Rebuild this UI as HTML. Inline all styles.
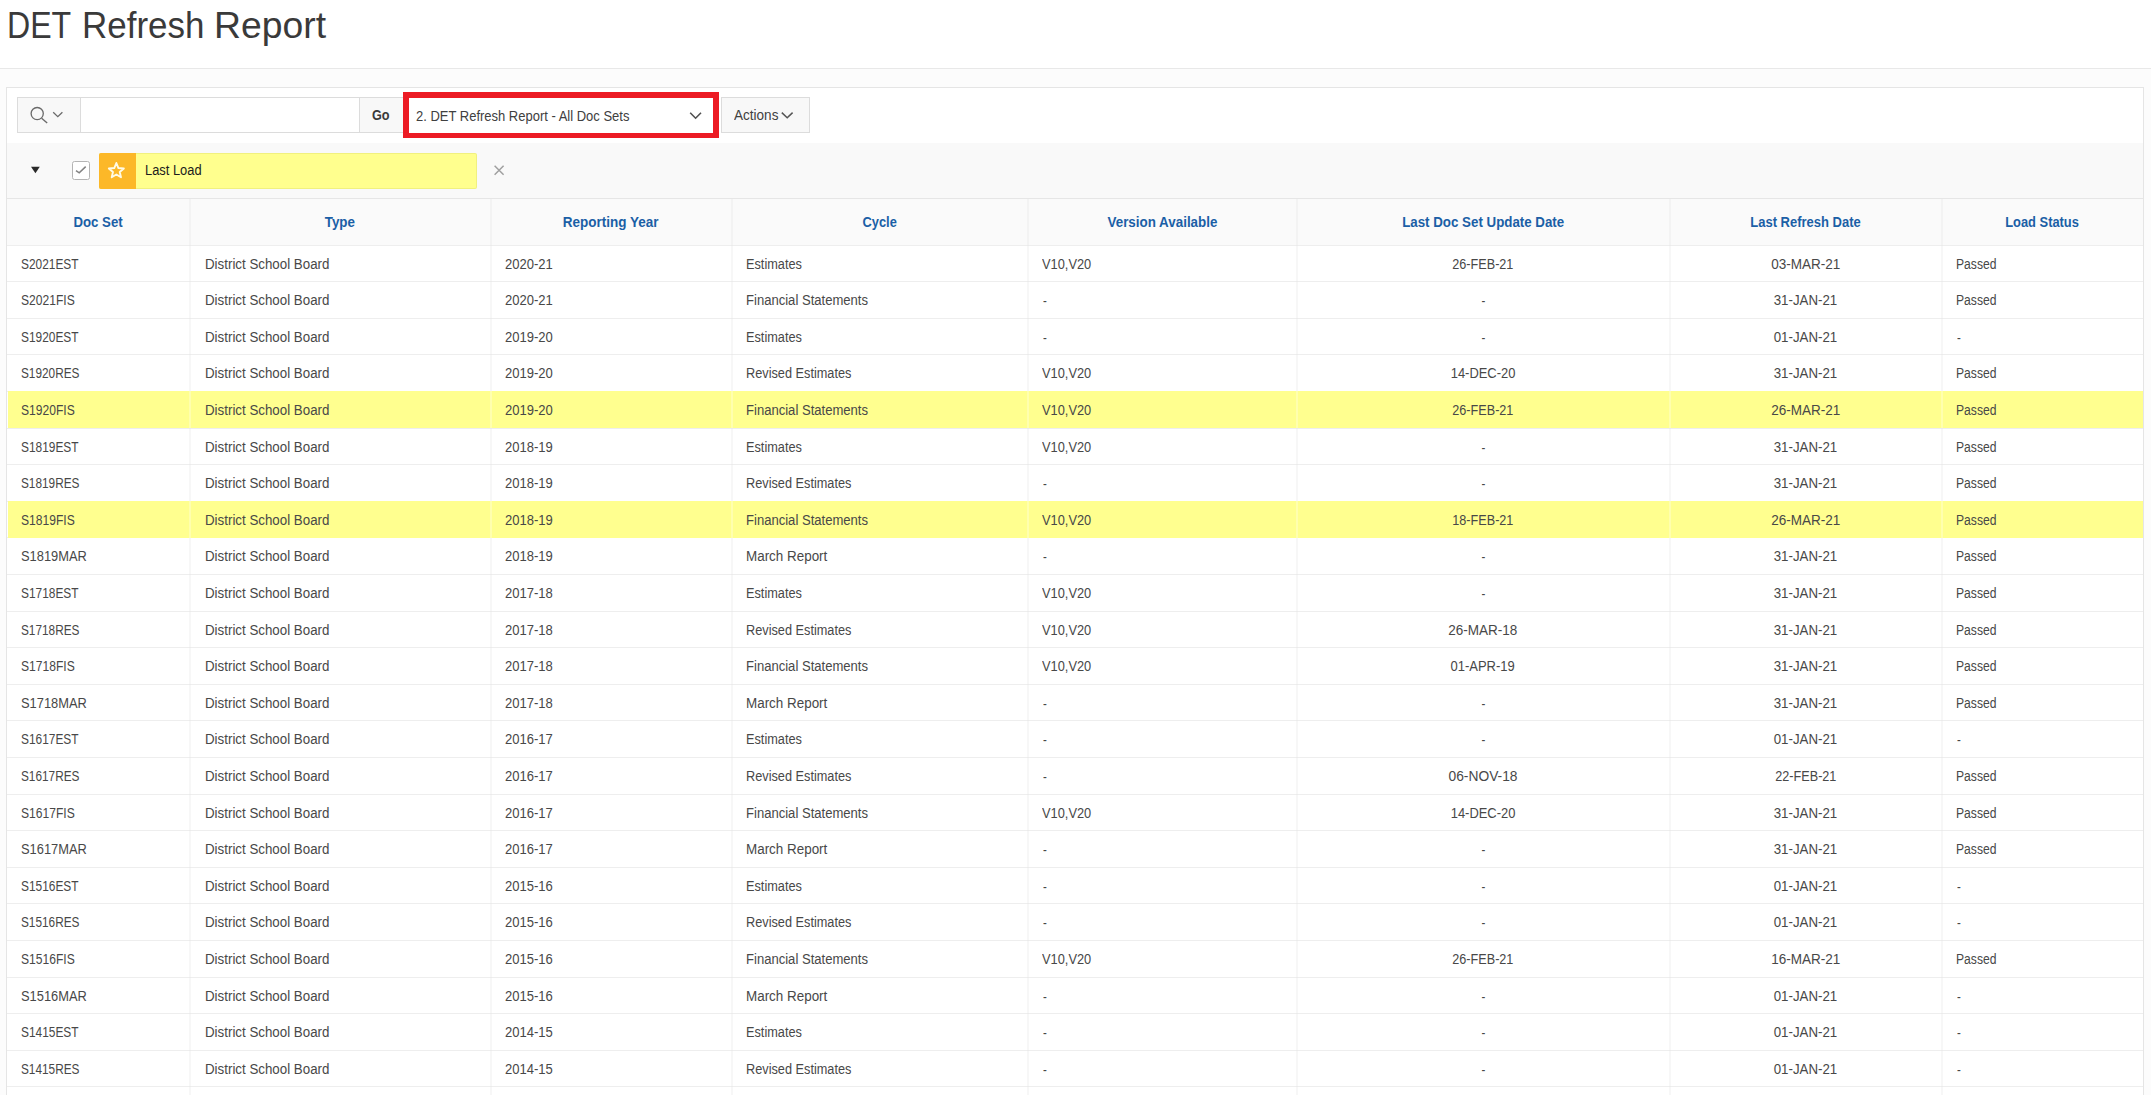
<!DOCTYPE html>
<html><head><meta charset="utf-8"><title>DET Refresh Report</title>
<style>
html,body{margin:0;padding:0;}
body{width:2151px;height:1095px;overflow:hidden;background:#fcfcfc;font-family:"Liberation Sans",sans-serif;position:relative;color:#404040;}
.abs{position:absolute;}
#top{left:0;top:0;width:2151px;height:68px;background:#fff;border-bottom:1px solid #e8e8e8;}
.tw{top:5.2px;font-size:36.5px;line-height:42px;color:#3a3a3a;white-space:nowrap;transform-origin:0 50%;}
#region{left:6px;top:87px;width:2136px;height:1020px;background:#fff;border:1px solid #e5e5e5;}
#band{left:7px;top:143px;width:2136px;height:55px;background:#f9f9f9;}
#thead{left:7px;top:198px;width:2136px;height:46px;background:#fafafa;border-top:1px solid #e6e6e6;}
.vl{position:absolute;width:2px;background:rgba(0,0,0,0.045);top:199px;height:900px;}
.hl{position:absolute;left:7px;width:2136px;height:1px;background:#eeeeee;}
.hi{position:absolute;left:8px;width:2135px;background:#ffff8f;}
.t{position:absolute;white-space:nowrap;font-size:14px;line-height:16px;height:16px;color:#484848;}
.t span{display:inline-block;transform-origin:0 50%;}
.t.c{text-align:center;}
.t.c span{transform-origin:50% 50%;}
.h{position:absolute;white-space:nowrap;font-size:14px;line-height:16px;height:16px;color:#1b5fa6;font-weight:bold;text-align:center;}
.h span{display:inline-block;transform-origin:50% 50%;}
.btn{position:absolute;background:#f8f8f8;border:1px solid #dcdcdc;box-sizing:border-box;}
</style></head><body>
<div id="top" class="abs"></div>
<div class="abs tw" style="left:7.26px;transform:scaleX(0.8801)">DET</div>
<div class="abs tw" style="left:82.12px;transform:scaleX(0.9584)">Refresh</div>
<div class="abs tw" style="left:214.33px;transform:scaleX(1.0226)">Report</div>
<div id="region" class="abs"></div>
<div id="band" class="abs"></div>
<div id="thead" class="abs"></div>
<div class="hl" style="top:244.5px"></div>
<div class="hl" style="top:281.1px"></div>
<div class="hl" style="top:317.7px"></div>
<div class="hl" style="top:354.3px"></div>
<div class="hl" style="top:390.9px"></div>
<div class="hl" style="top:427.5px"></div>
<div class="hl" style="top:464.1px"></div>
<div class="hl" style="top:500.7px"></div>
<div class="hl" style="top:537.3px"></div>
<div class="hl" style="top:573.9px"></div>
<div class="hl" style="top:610.5px"></div>
<div class="hl" style="top:647.1px"></div>
<div class="hl" style="top:683.7px"></div>
<div class="hl" style="top:720.3px"></div>
<div class="hl" style="top:756.9px"></div>
<div class="hl" style="top:793.5px"></div>
<div class="hl" style="top:830.1px"></div>
<div class="hl" style="top:866.7px"></div>
<div class="hl" style="top:903.3px"></div>
<div class="hl" style="top:939.9px"></div>
<div class="hl" style="top:976.5px"></div>
<div class="hl" style="top:1013.1px"></div>
<div class="hl" style="top:1049.7px"></div>
<div class="hl" style="top:1086.3px"></div>
<div class="vl" style="left:189px"></div>
<div class="vl" style="left:490px"></div>
<div class="vl" style="left:731px"></div>
<div class="vl" style="left:1027px"></div>
<div class="vl" style="left:1296px"></div>
<div class="vl" style="left:1669px"></div>
<div class="vl" style="left:1941px"></div>
<div class="hi" style="top:391.3px;height:36.6px"></div>
<div class="hi" style="top:501.1px;height:36.6px"></div>
<div class="vl" style="left:189px;background:rgba(255,255,255,0.28)"></div>
<div class="vl" style="left:490px;background:rgba(255,255,255,0.28)"></div>
<div class="vl" style="left:731px;background:rgba(255,255,255,0.28)"></div>
<div class="vl" style="left:1027px;background:rgba(255,255,255,0.28)"></div>
<div class="vl" style="left:1296px;background:rgba(255,255,255,0.28)"></div>
<div class="vl" style="left:1669px;background:rgba(255,255,255,0.28)"></div>
<div class="vl" style="left:1941px;background:rgba(255,255,255,0.28)"></div>
<div class="h" style="left:8px;width:181px;top:214px"><span style="transform:scaleX(0.9420)">Doc Set</span></div>
<div class="h" style="left:190px;width:300px;top:214px"><span style="transform:scaleX(0.9546)">Type</span></div>
<div class="h" style="left:491px;width:240px;top:214px"><span style="transform:scaleX(0.9625)">Reporting Year</span></div>
<div class="h" style="left:732px;width:295px;top:214px"><span style="transform:scaleX(0.9181)">Cycle</span></div>
<div class="h" style="left:1028px;width:268px;top:214px"><span style="transform:scaleX(0.9564)">Version Available</span></div>
<div class="h" style="left:1297px;width:372px;top:214px"><span style="transform:scaleX(0.9509)">Last Doc Set Update Date</span></div>
<div class="h" style="left:1670px;width:271px;top:214px"><span style="transform:scaleX(0.9274)">Last Refresh Date</span></div>
<div class="h" style="left:1942px;width:201px;top:214px"><span style="transform:scaleX(0.9187)">Load Status</span></div>
<div class="t" style="left:21.2px;top:255.6px"><span style="transform:scaleX(0.8492)">S2021EST</span></div>
<div class="t" style="left:205.4px;top:255.6px"><span style="transform:scaleX(0.9517)">District School Board</span></div>
<div class="t" style="left:504.6px;top:255.6px"><span style="transform:scaleX(0.9303)">2020-21</span></div>
<div class="t" style="left:746.2px;top:255.6px"><span style="transform:scaleX(0.9095)">Estimates</span></div>
<div class="t" style="left:1042.4px;top:255.6px"><span style="transform:scaleX(0.9160)">V10,V20</span></div>
<div class="t c" style="left:1297.0px;width:372px;top:255.6px"><span style="transform:scaleX(0.9026)">26-FEB-21</span></div>
<div class="t c" style="left:1670.0px;width:271px;top:255.6px"><span style="transform:scaleX(0.9654)">03-MAR-21</span></div>
<div class="t" style="left:1955.8px;top:255.6px"><span style="transform:scaleX(0.8673)">Passed</span></div>
<div class="t" style="left:21.2px;top:292.2px"><span style="transform:scaleX(0.8625)">S2021FIS</span></div>
<div class="t" style="left:205.4px;top:292.2px"><span style="transform:scaleX(0.9517)">District School Board</span></div>
<div class="t" style="left:504.6px;top:292.2px"><span style="transform:scaleX(0.9303)">2020-21</span></div>
<div class="t" style="left:746.2px;top:292.2px"><span style="transform:scaleX(0.9332)">Financial Statements</span></div>
<div class="t" style="left:1043.4px;top:293.2px"><span style="transform:scaleX(0.8151)">-</span></div>
<div class="t c" style="left:1297.0px;width:372px;top:293.2px"><span style="transform:scaleX(0.8151)">-</span></div>
<div class="t c" style="left:1670.0px;width:271px;top:292.2px"><span style="transform:scaleX(0.9489)">31-JAN-21</span></div>
<div class="t" style="left:1955.8px;top:292.2px"><span style="transform:scaleX(0.8673)">Passed</span></div>
<div class="t" style="left:21.2px;top:328.8px"><span style="transform:scaleX(0.8492)">S1920EST</span></div>
<div class="t" style="left:205.4px;top:328.8px"><span style="transform:scaleX(0.9517)">District School Board</span></div>
<div class="t" style="left:504.6px;top:328.8px"><span style="transform:scaleX(0.9303)">2019-20</span></div>
<div class="t" style="left:746.2px;top:328.8px"><span style="transform:scaleX(0.9095)">Estimates</span></div>
<div class="t" style="left:1043.4px;top:329.8px"><span style="transform:scaleX(0.8151)">-</span></div>
<div class="t c" style="left:1297.0px;width:372px;top:329.8px"><span style="transform:scaleX(0.8151)">-</span></div>
<div class="t c" style="left:1670.0px;width:271px;top:328.8px"><span style="transform:scaleX(0.9489)">01-JAN-21</span></div>
<div class="t" style="left:1956.8px;top:329.8px"><span style="transform:scaleX(0.8151)">-</span></div>
<div class="t" style="left:21.2px;top:365.4px"><span style="transform:scaleX(0.8431)">S1920RES</span></div>
<div class="t" style="left:205.4px;top:365.4px"><span style="transform:scaleX(0.9517)">District School Board</span></div>
<div class="t" style="left:504.6px;top:365.4px"><span style="transform:scaleX(0.9303)">2019-20</span></div>
<div class="t" style="left:746.2px;top:365.4px"><span style="transform:scaleX(0.9092)">Revised Estimates</span></div>
<div class="t" style="left:1042.4px;top:365.4px"><span style="transform:scaleX(0.9160)">V10,V20</span></div>
<div class="t c" style="left:1297.0px;width:372px;top:365.4px"><span style="transform:scaleX(0.9225)">14-DEC-20</span></div>
<div class="t c" style="left:1670.0px;width:271px;top:365.4px"><span style="transform:scaleX(0.9489)">31-JAN-21</span></div>
<div class="t" style="left:1955.8px;top:365.4px"><span style="transform:scaleX(0.8673)">Passed</span></div>
<div class="t" style="left:21.2px;top:402.0px"><span style="transform:scaleX(0.8625)">S1920FIS</span></div>
<div class="t" style="left:205.4px;top:402.0px"><span style="transform:scaleX(0.9517)">District School Board</span></div>
<div class="t" style="left:504.6px;top:402.0px"><span style="transform:scaleX(0.9303)">2019-20</span></div>
<div class="t" style="left:746.2px;top:402.0px"><span style="transform:scaleX(0.9332)">Financial Statements</span></div>
<div class="t" style="left:1042.4px;top:402.0px"><span style="transform:scaleX(0.9160)">V10,V20</span></div>
<div class="t c" style="left:1297.0px;width:372px;top:402.0px"><span style="transform:scaleX(0.9026)">26-FEB-21</span></div>
<div class="t c" style="left:1670.0px;width:271px;top:402.0px"><span style="transform:scaleX(0.9654)">26-MAR-21</span></div>
<div class="t" style="left:1955.8px;top:402.0px"><span style="transform:scaleX(0.8673)">Passed</span></div>
<div class="t" style="left:21.2px;top:438.6px"><span style="transform:scaleX(0.8492)">S1819EST</span></div>
<div class="t" style="left:205.4px;top:438.6px"><span style="transform:scaleX(0.9517)">District School Board</span></div>
<div class="t" style="left:504.6px;top:438.6px"><span style="transform:scaleX(0.9303)">2018-19</span></div>
<div class="t" style="left:746.2px;top:438.6px"><span style="transform:scaleX(0.9095)">Estimates</span></div>
<div class="t" style="left:1042.4px;top:438.6px"><span style="transform:scaleX(0.9160)">V10,V20</span></div>
<div class="t c" style="left:1297.0px;width:372px;top:439.6px"><span style="transform:scaleX(0.8151)">-</span></div>
<div class="t c" style="left:1670.0px;width:271px;top:438.6px"><span style="transform:scaleX(0.9489)">31-JAN-21</span></div>
<div class="t" style="left:1955.8px;top:438.6px"><span style="transform:scaleX(0.8673)">Passed</span></div>
<div class="t" style="left:21.2px;top:475.2px"><span style="transform:scaleX(0.8431)">S1819RES</span></div>
<div class="t" style="left:205.4px;top:475.2px"><span style="transform:scaleX(0.9517)">District School Board</span></div>
<div class="t" style="left:504.6px;top:475.2px"><span style="transform:scaleX(0.9303)">2018-19</span></div>
<div class="t" style="left:746.2px;top:475.2px"><span style="transform:scaleX(0.9092)">Revised Estimates</span></div>
<div class="t" style="left:1043.4px;top:476.2px"><span style="transform:scaleX(0.8151)">-</span></div>
<div class="t c" style="left:1297.0px;width:372px;top:476.2px"><span style="transform:scaleX(0.8151)">-</span></div>
<div class="t c" style="left:1670.0px;width:271px;top:475.2px"><span style="transform:scaleX(0.9489)">31-JAN-21</span></div>
<div class="t" style="left:1955.8px;top:475.2px"><span style="transform:scaleX(0.8673)">Passed</span></div>
<div class="t" style="left:21.2px;top:511.8px"><span style="transform:scaleX(0.8625)">S1819FIS</span></div>
<div class="t" style="left:205.4px;top:511.8px"><span style="transform:scaleX(0.9517)">District School Board</span></div>
<div class="t" style="left:504.6px;top:511.8px"><span style="transform:scaleX(0.9303)">2018-19</span></div>
<div class="t" style="left:746.2px;top:511.8px"><span style="transform:scaleX(0.9332)">Financial Statements</span></div>
<div class="t" style="left:1042.4px;top:511.8px"><span style="transform:scaleX(0.9160)">V10,V20</span></div>
<div class="t c" style="left:1297.0px;width:372px;top:511.8px"><span style="transform:scaleX(0.9026)">18-FEB-21</span></div>
<div class="t c" style="left:1670.0px;width:271px;top:511.8px"><span style="transform:scaleX(0.9654)">26-MAR-21</span></div>
<div class="t" style="left:1955.8px;top:511.8px"><span style="transform:scaleX(0.8673)">Passed</span></div>
<div class="t" style="left:21.2px;top:548.4px"><span style="transform:scaleX(0.9191)">S1819MAR</span></div>
<div class="t" style="left:205.4px;top:548.4px"><span style="transform:scaleX(0.9517)">District School Board</span></div>
<div class="t" style="left:504.6px;top:548.4px"><span style="transform:scaleX(0.9303)">2018-19</span></div>
<div class="t" style="left:746.2px;top:548.4px"><span style="transform:scaleX(0.9587)">March Report</span></div>
<div class="t" style="left:1043.4px;top:549.4px"><span style="transform:scaleX(0.8151)">-</span></div>
<div class="t c" style="left:1297.0px;width:372px;top:549.4px"><span style="transform:scaleX(0.8151)">-</span></div>
<div class="t c" style="left:1670.0px;width:271px;top:548.4px"><span style="transform:scaleX(0.9489)">31-JAN-21</span></div>
<div class="t" style="left:1955.8px;top:548.4px"><span style="transform:scaleX(0.8673)">Passed</span></div>
<div class="t" style="left:21.2px;top:585.0px"><span style="transform:scaleX(0.8492)">S1718EST</span></div>
<div class="t" style="left:205.4px;top:585.0px"><span style="transform:scaleX(0.9517)">District School Board</span></div>
<div class="t" style="left:504.6px;top:585.0px"><span style="transform:scaleX(0.9303)">2017-18</span></div>
<div class="t" style="left:746.2px;top:585.0px"><span style="transform:scaleX(0.9095)">Estimates</span></div>
<div class="t" style="left:1042.4px;top:585.0px"><span style="transform:scaleX(0.9160)">V10,V20</span></div>
<div class="t c" style="left:1297.0px;width:372px;top:586.0px"><span style="transform:scaleX(0.8151)">-</span></div>
<div class="t c" style="left:1670.0px;width:271px;top:585.0px"><span style="transform:scaleX(0.9489)">31-JAN-21</span></div>
<div class="t" style="left:1955.8px;top:585.0px"><span style="transform:scaleX(0.8673)">Passed</span></div>
<div class="t" style="left:21.2px;top:621.6px"><span style="transform:scaleX(0.8431)">S1718RES</span></div>
<div class="t" style="left:205.4px;top:621.6px"><span style="transform:scaleX(0.9517)">District School Board</span></div>
<div class="t" style="left:504.6px;top:621.6px"><span style="transform:scaleX(0.9303)">2017-18</span></div>
<div class="t" style="left:746.2px;top:621.6px"><span style="transform:scaleX(0.9092)">Revised Estimates</span></div>
<div class="t" style="left:1042.4px;top:621.6px"><span style="transform:scaleX(0.9160)">V10,V20</span></div>
<div class="t c" style="left:1297.0px;width:372px;top:621.6px"><span style="transform:scaleX(0.9654)">26-MAR-18</span></div>
<div class="t c" style="left:1670.0px;width:271px;top:621.6px"><span style="transform:scaleX(0.9489)">31-JAN-21</span></div>
<div class="t" style="left:1955.8px;top:621.6px"><span style="transform:scaleX(0.8673)">Passed</span></div>
<div class="t" style="left:21.2px;top:658.2px"><span style="transform:scaleX(0.8625)">S1718FIS</span></div>
<div class="t" style="left:205.4px;top:658.2px"><span style="transform:scaleX(0.9517)">District School Board</span></div>
<div class="t" style="left:504.6px;top:658.2px"><span style="transform:scaleX(0.9303)">2017-18</span></div>
<div class="t" style="left:746.2px;top:658.2px"><span style="transform:scaleX(0.9332)">Financial Statements</span></div>
<div class="t" style="left:1042.4px;top:658.2px"><span style="transform:scaleX(0.9160)">V10,V20</span></div>
<div class="t c" style="left:1297.0px;width:372px;top:658.2px"><span style="transform:scaleX(0.9285)">01-APR-19</span></div>
<div class="t c" style="left:1670.0px;width:271px;top:658.2px"><span style="transform:scaleX(0.9489)">31-JAN-21</span></div>
<div class="t" style="left:1955.8px;top:658.2px"><span style="transform:scaleX(0.8673)">Passed</span></div>
<div class="t" style="left:21.2px;top:694.8px"><span style="transform:scaleX(0.9191)">S1718MAR</span></div>
<div class="t" style="left:205.4px;top:694.8px"><span style="transform:scaleX(0.9517)">District School Board</span></div>
<div class="t" style="left:504.6px;top:694.8px"><span style="transform:scaleX(0.9303)">2017-18</span></div>
<div class="t" style="left:746.2px;top:694.8px"><span style="transform:scaleX(0.9587)">March Report</span></div>
<div class="t" style="left:1043.4px;top:695.8px"><span style="transform:scaleX(0.8151)">-</span></div>
<div class="t c" style="left:1297.0px;width:372px;top:695.8px"><span style="transform:scaleX(0.8151)">-</span></div>
<div class="t c" style="left:1670.0px;width:271px;top:694.8px"><span style="transform:scaleX(0.9489)">31-JAN-21</span></div>
<div class="t" style="left:1955.8px;top:694.8px"><span style="transform:scaleX(0.8673)">Passed</span></div>
<div class="t" style="left:21.2px;top:731.4px"><span style="transform:scaleX(0.8492)">S1617EST</span></div>
<div class="t" style="left:205.4px;top:731.4px"><span style="transform:scaleX(0.9517)">District School Board</span></div>
<div class="t" style="left:504.6px;top:731.4px"><span style="transform:scaleX(0.9303)">2016-17</span></div>
<div class="t" style="left:746.2px;top:731.4px"><span style="transform:scaleX(0.9095)">Estimates</span></div>
<div class="t" style="left:1043.4px;top:732.4px"><span style="transform:scaleX(0.8151)">-</span></div>
<div class="t c" style="left:1297.0px;width:372px;top:732.4px"><span style="transform:scaleX(0.8151)">-</span></div>
<div class="t c" style="left:1670.0px;width:271px;top:731.4px"><span style="transform:scaleX(0.9489)">01-JAN-21</span></div>
<div class="t" style="left:1956.8px;top:732.4px"><span style="transform:scaleX(0.8151)">-</span></div>
<div class="t" style="left:21.2px;top:768.0px"><span style="transform:scaleX(0.8431)">S1617RES</span></div>
<div class="t" style="left:205.4px;top:768.0px"><span style="transform:scaleX(0.9517)">District School Board</span></div>
<div class="t" style="left:504.6px;top:768.0px"><span style="transform:scaleX(0.9303)">2016-17</span></div>
<div class="t" style="left:746.2px;top:768.0px"><span style="transform:scaleX(0.9092)">Revised Estimates</span></div>
<div class="t" style="left:1043.4px;top:769.0px"><span style="transform:scaleX(0.8151)">-</span></div>
<div class="t c" style="left:1297.0px;width:372px;top:768.0px"><span style="transform:scaleX(0.9852)">06-NOV-18</span></div>
<div class="t c" style="left:1670.0px;width:271px;top:768.0px"><span style="transform:scaleX(0.9026)">22-FEB-21</span></div>
<div class="t" style="left:1955.8px;top:768.0px"><span style="transform:scaleX(0.8673)">Passed</span></div>
<div class="t" style="left:21.2px;top:804.6px"><span style="transform:scaleX(0.8625)">S1617FIS</span></div>
<div class="t" style="left:205.4px;top:804.6px"><span style="transform:scaleX(0.9517)">District School Board</span></div>
<div class="t" style="left:504.6px;top:804.6px"><span style="transform:scaleX(0.9303)">2016-17</span></div>
<div class="t" style="left:746.2px;top:804.6px"><span style="transform:scaleX(0.9332)">Financial Statements</span></div>
<div class="t" style="left:1042.4px;top:804.6px"><span style="transform:scaleX(0.9160)">V10,V20</span></div>
<div class="t c" style="left:1297.0px;width:372px;top:804.6px"><span style="transform:scaleX(0.9225)">14-DEC-20</span></div>
<div class="t c" style="left:1670.0px;width:271px;top:804.6px"><span style="transform:scaleX(0.9489)">31-JAN-21</span></div>
<div class="t" style="left:1955.8px;top:804.6px"><span style="transform:scaleX(0.8673)">Passed</span></div>
<div class="t" style="left:21.2px;top:841.2px"><span style="transform:scaleX(0.9191)">S1617MAR</span></div>
<div class="t" style="left:205.4px;top:841.2px"><span style="transform:scaleX(0.9517)">District School Board</span></div>
<div class="t" style="left:504.6px;top:841.2px"><span style="transform:scaleX(0.9303)">2016-17</span></div>
<div class="t" style="left:746.2px;top:841.2px"><span style="transform:scaleX(0.9587)">March Report</span></div>
<div class="t" style="left:1043.4px;top:842.2px"><span style="transform:scaleX(0.8151)">-</span></div>
<div class="t c" style="left:1297.0px;width:372px;top:842.2px"><span style="transform:scaleX(0.8151)">-</span></div>
<div class="t c" style="left:1670.0px;width:271px;top:841.2px"><span style="transform:scaleX(0.9489)">31-JAN-21</span></div>
<div class="t" style="left:1955.8px;top:841.2px"><span style="transform:scaleX(0.8673)">Passed</span></div>
<div class="t" style="left:21.2px;top:877.8px"><span style="transform:scaleX(0.8492)">S1516EST</span></div>
<div class="t" style="left:205.4px;top:877.8px"><span style="transform:scaleX(0.9517)">District School Board</span></div>
<div class="t" style="left:504.6px;top:877.8px"><span style="transform:scaleX(0.9303)">2015-16</span></div>
<div class="t" style="left:746.2px;top:877.8px"><span style="transform:scaleX(0.9095)">Estimates</span></div>
<div class="t" style="left:1043.4px;top:878.8px"><span style="transform:scaleX(0.8151)">-</span></div>
<div class="t c" style="left:1297.0px;width:372px;top:878.8px"><span style="transform:scaleX(0.8151)">-</span></div>
<div class="t c" style="left:1670.0px;width:271px;top:877.8px"><span style="transform:scaleX(0.9489)">01-JAN-21</span></div>
<div class="t" style="left:1956.8px;top:878.8px"><span style="transform:scaleX(0.8151)">-</span></div>
<div class="t" style="left:21.2px;top:914.4px"><span style="transform:scaleX(0.8431)">S1516RES</span></div>
<div class="t" style="left:205.4px;top:914.4px"><span style="transform:scaleX(0.9517)">District School Board</span></div>
<div class="t" style="left:504.6px;top:914.4px"><span style="transform:scaleX(0.9303)">2015-16</span></div>
<div class="t" style="left:746.2px;top:914.4px"><span style="transform:scaleX(0.9092)">Revised Estimates</span></div>
<div class="t" style="left:1043.4px;top:915.4px"><span style="transform:scaleX(0.8151)">-</span></div>
<div class="t c" style="left:1297.0px;width:372px;top:915.4px"><span style="transform:scaleX(0.8151)">-</span></div>
<div class="t c" style="left:1670.0px;width:271px;top:914.4px"><span style="transform:scaleX(0.9489)">01-JAN-21</span></div>
<div class="t" style="left:1956.8px;top:915.4px"><span style="transform:scaleX(0.8151)">-</span></div>
<div class="t" style="left:21.2px;top:951.0px"><span style="transform:scaleX(0.8625)">S1516FIS</span></div>
<div class="t" style="left:205.4px;top:951.0px"><span style="transform:scaleX(0.9517)">District School Board</span></div>
<div class="t" style="left:504.6px;top:951.0px"><span style="transform:scaleX(0.9303)">2015-16</span></div>
<div class="t" style="left:746.2px;top:951.0px"><span style="transform:scaleX(0.9332)">Financial Statements</span></div>
<div class="t" style="left:1042.4px;top:951.0px"><span style="transform:scaleX(0.9160)">V10,V20</span></div>
<div class="t c" style="left:1297.0px;width:372px;top:951.0px"><span style="transform:scaleX(0.9026)">26-FEB-21</span></div>
<div class="t c" style="left:1670.0px;width:271px;top:951.0px"><span style="transform:scaleX(0.9654)">16-MAR-21</span></div>
<div class="t" style="left:1955.8px;top:951.0px"><span style="transform:scaleX(0.8673)">Passed</span></div>
<div class="t" style="left:21.2px;top:987.6px"><span style="transform:scaleX(0.9191)">S1516MAR</span></div>
<div class="t" style="left:205.4px;top:987.6px"><span style="transform:scaleX(0.9517)">District School Board</span></div>
<div class="t" style="left:504.6px;top:987.6px"><span style="transform:scaleX(0.9303)">2015-16</span></div>
<div class="t" style="left:746.2px;top:987.6px"><span style="transform:scaleX(0.9587)">March Report</span></div>
<div class="t" style="left:1043.4px;top:988.6px"><span style="transform:scaleX(0.8151)">-</span></div>
<div class="t c" style="left:1297.0px;width:372px;top:988.6px"><span style="transform:scaleX(0.8151)">-</span></div>
<div class="t c" style="left:1670.0px;width:271px;top:987.6px"><span style="transform:scaleX(0.9489)">01-JAN-21</span></div>
<div class="t" style="left:1956.8px;top:988.6px"><span style="transform:scaleX(0.8151)">-</span></div>
<div class="t" style="left:21.2px;top:1024.2px"><span style="transform:scaleX(0.8492)">S1415EST</span></div>
<div class="t" style="left:205.4px;top:1024.2px"><span style="transform:scaleX(0.9517)">District School Board</span></div>
<div class="t" style="left:504.6px;top:1024.2px"><span style="transform:scaleX(0.9303)">2014-15</span></div>
<div class="t" style="left:746.2px;top:1024.2px"><span style="transform:scaleX(0.9095)">Estimates</span></div>
<div class="t" style="left:1043.4px;top:1025.2px"><span style="transform:scaleX(0.8151)">-</span></div>
<div class="t c" style="left:1297.0px;width:372px;top:1025.2px"><span style="transform:scaleX(0.8151)">-</span></div>
<div class="t c" style="left:1670.0px;width:271px;top:1024.2px"><span style="transform:scaleX(0.9489)">01-JAN-21</span></div>
<div class="t" style="left:1956.8px;top:1025.2px"><span style="transform:scaleX(0.8151)">-</span></div>
<div class="t" style="left:21.2px;top:1060.8px"><span style="transform:scaleX(0.8431)">S1415RES</span></div>
<div class="t" style="left:205.4px;top:1060.8px"><span style="transform:scaleX(0.9517)">District School Board</span></div>
<div class="t" style="left:504.6px;top:1060.8px"><span style="transform:scaleX(0.9303)">2014-15</span></div>
<div class="t" style="left:746.2px;top:1060.8px"><span style="transform:scaleX(0.9092)">Revised Estimates</span></div>
<div class="t" style="left:1043.4px;top:1061.8px"><span style="transform:scaleX(0.8151)">-</span></div>
<div class="t c" style="left:1297.0px;width:372px;top:1061.8px"><span style="transform:scaleX(0.8151)">-</span></div>
<div class="t c" style="left:1670.0px;width:271px;top:1060.8px"><span style="transform:scaleX(0.9489)">01-JAN-21</span></div>
<div class="t" style="left:1956.8px;top:1061.8px"><span style="transform:scaleX(0.8151)">-</span></div>

<div class="btn" style="left:17px;top:97px;width:63px;height:36px;border-right:none;"></div>
<svg class="abs" style="left:28.2px;top:103.6px" width="40" height="22" viewBox="0 0 40 22">
 <circle cx="9.2" cy="9.6" r="6.1" fill="none" stroke="#6a6a6a" stroke-width="1.3"/>
 <line x1="13.6" y1="14.2" x2="19.2" y2="19.0" stroke="#6a6a6a" stroke-width="1.4"/>
 <polyline points="25.2,8.2 29.8,12.6 34.4,8.2" fill="none" stroke="#6a6a6a" stroke-width="1.3"/>
</svg>
<div class="abs" style="left:80px;top:97px;width:280px;height:36px;background:#fff;border:1px solid #dcdcdc;box-sizing:border-box;"></div>
<div class="btn" style="left:359px;top:97px;width:46px;height:36px;"></div>
<div class="abs" style="left:372px;top:107px;font-size:14px;line-height:16px;font-weight:bold;color:#3a3a3a;white-space:nowrap;"><span style="display:inline-block;transform-origin:0 50%;transform:scaleX(0.9053)">Go</span></div>
<div class="abs" style="left:403px;top:92px;width:316px;height:46px;box-sizing:border-box;border:6px solid #ec1b24;border-bottom-width:5px;background:#fff;"></div>
<div class="abs" style="left:416.2px;top:108.2px;font-size:14px;line-height:16px;color:#404040;white-space:nowrap;"><span style="display:inline-block;transform-origin:0 50%;transform:scaleX(0.9276)">2. DET Refresh Report - All Doc Sets</span></div>
<svg class="abs" style="left:686px;top:106.6px" width="20" height="18" viewBox="0 0 20 18"><polyline points="4.2,5.8 9.6,11.2 15,5.8" fill="none" stroke="#505050" stroke-width="1.6"/></svg>
<div class="btn" style="left:721px;top:97px;width:89px;height:36px;"></div>
<div class="abs" style="left:734px;top:106.5px;font-size:14px;line-height:16px;color:#404040;white-space:nowrap;"><span style="display:inline-block;transform-origin:0 50%;transform:scaleX(0.9671)">Actions</span></div>
<svg class="abs" style="left:778px;top:106.6px" width="20" height="18" viewBox="0 0 20 18"><polyline points="3.8,5.6 9.2,10.8 14.6,5.6" fill="none" stroke="#555" stroke-width="1.5"/></svg>
<svg class="abs" style="left:28px;top:162px" width="16" height="16" viewBox="0 0 16 16"><polygon points="3,4.8 11.8,4.8 7.4,11.2" fill="#2a2a2a"/></svg>
<div class="abs" style="left:72px;top:161px;width:18px;height:19px;box-sizing:border-box;border:1px solid #b4b4b4;border-radius:2.5px;background:#fff;"></div>
<svg class="abs" style="left:72px;top:161px" width="18" height="19" viewBox="0 0 18 19"><polyline points="4.0,9.7 7.2,11.9 13.7,5.6" fill="none" stroke="#828282" stroke-width="1.5"/></svg>
<div class="abs" style="left:98.5px;top:153px;width:378.2px;height:36px;background:#ffff8e;border-radius:2px;box-shadow:inset 0 0 0 1px rgba(120,120,0,0.10);"></div>
<div class="abs" style="left:98.5px;top:153px;width:37.5px;height:36px;background:#fcb828;border-radius:2px 0 0 2px;"></div>
<svg class="abs" style="left:106px;top:160px" width="22" height="22" viewBox="0 0 22 22"><polygon points="10.35,3.00 12.44,8.03 17.86,8.46 13.73,12.00 14.99,17.29 10.35,14.45 5.71,17.29 6.97,12.00 2.84,8.46 8.26,8.03" fill="none" stroke="#fffbe6" stroke-width="1.9" stroke-linejoin="round"/></svg>
<div class="abs" style="left:145.3px;top:162.4px;font-size:14px;line-height:16px;color:#1c1c1c;white-space:nowrap;"><span style="display:inline-block;transform-origin:0 50%;transform:scaleX(0.9204)">Last Load</span></div>
<svg class="abs" style="left:491px;top:162px" width="16" height="16" viewBox="0 0 16 16"><path d="M3.6,3.8 L12.6,12.8 M12.6,3.8 L3.6,12.8" fill="none" stroke="#a0a0a0" stroke-width="1.5"/></svg>
</body></html>
